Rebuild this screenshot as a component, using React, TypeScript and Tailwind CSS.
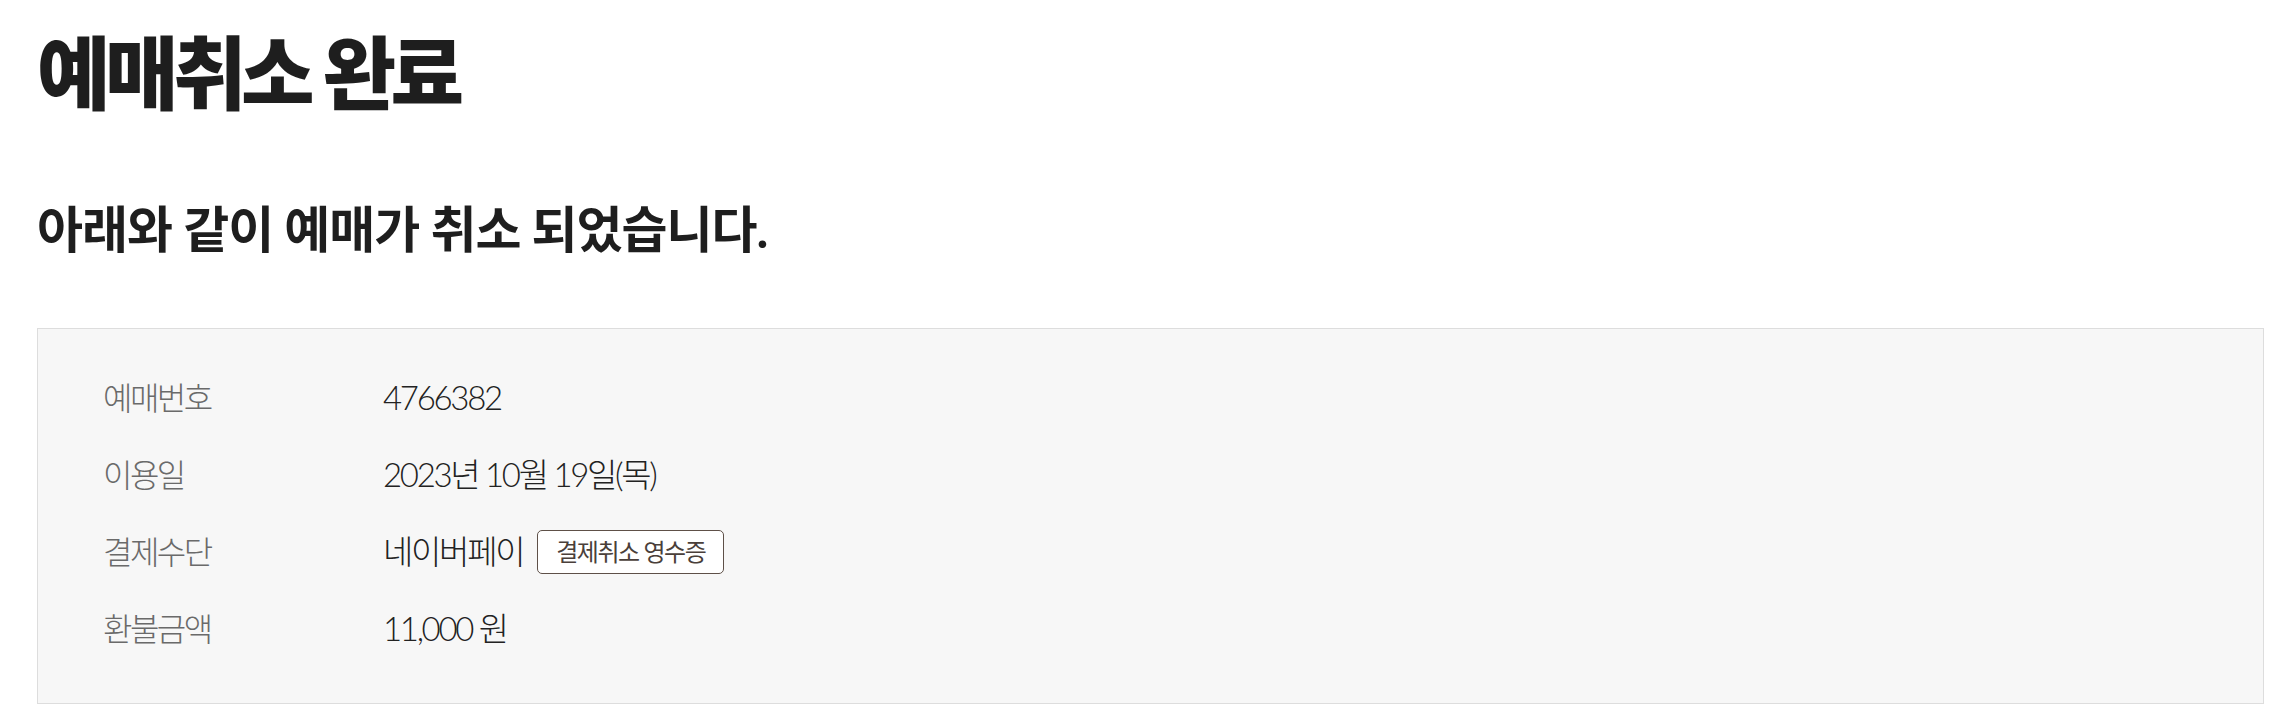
const ROWS = [
  { label: "예매번호", value: "4766382" },
  { label: "이용일", value: "2023년 10월 19일(목)" },
  { label: "결제수단", value: "네이버페이", receipt: true },
  { label: "환불금액", value: "11,000 원" },
];

export default function App() {
  return (
    <div className="min-h-screen bg-white pt-[22px] pl-[37px] pr-[30px] font-['Lato','Noto_Sans_CJK_KR',sans-serif] text-[#1e1e1e]">
      <h1 className="text-[80px] leading-[100px] font-black tracking-[-0.07em]">예매취소 완료</h1>

      <p className="mt-[77px] text-[50px] leading-[60px] font-bold tracking-[-0.02em]">아래와 같이 예매가 취소 되었습니다.</p>

      <div className="mt-[69px] border border-[#dddddd] bg-[#f7f7f7] pl-[65px] pt-[30px] pb-[36px]">
        {ROWS.map((r) => (
          <div key={r.label} className="flex items-center h-[77px]">
            <div className="w-[280px] text-[32px] font-light text-[#6a6a6a] tracking-[-0.08em]">{r.label}</div>
            <div className="flex items-center text-[33px] font-light text-[#222222] tracking-[-0.07em]">
              <span>{r.value}</span>
              {r.receipt && (
                <button className="ml-[14px] h-[44px] w-[187px] rounded-[5px] border border-[#5e5048] bg-white text-[24px] font-normal text-[#4a3f3a] tracking-[-0.06em]">
                  결제취소 영수증
                </button>
              )}
            </div>
          </div>
        ))}
      </div>
    </div>
  );
}
